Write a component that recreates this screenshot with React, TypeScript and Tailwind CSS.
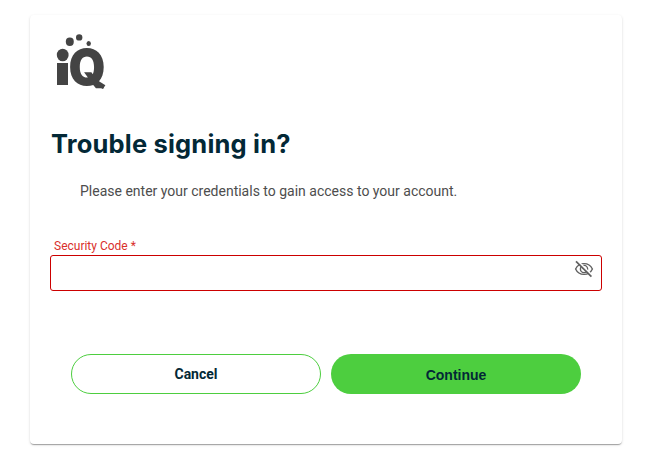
import { useState } from "react";

function Logo() {
  return (
    <svg width="52" height="58" viewBox="0 0 52 58" className="ml-1.5 block overflow-visible" fill="#444444" aria-label="iQ">
      <ellipse cx="6.7" cy="21" rx="5.9" ry="6.3" />
      <rect x="1" y="29" width="11" height="22" />
      <ellipse cx="13.8" cy="7.8" rx="4" ry="4.2" />
      <circle cx="23.2" cy="3.4" r="3.2" />
      <ellipse cx="32.7" cy="9.6" rx="2.2" ry="2.5" />
      <text
        transform="translate(12.6 51.3) scale(.97 1)"
        fontFamily="Inter, 'Liberation Sans', sans-serif"
        fontWeight="900"
        fontSize="49"
      >
        Q
      </text>
      <path d="M41 46 49.4 51.2 46.8 55 37 49Z" />
    </svg>
  );
}

function EyeOffIcon() {
  return (
    <svg width="20" height="20" viewBox="0 0 20 20" fill="none" stroke="#606060" strokeWidth="1.4">
      <path d="M1.6 10C3.2 6.5 6.2 4.6 10 4.6S16.8 6.5 18.4 10C16.8 13.5 13.8 15.4 10 15.4S3.2 13.5 1.6 10Z" />
      <circle cx="10" cy="10" r="3.6" />
      <path d="M3.2 1.4 18.6 16.8" stroke="#ffffff" strokeWidth="1.6" />
      <path d="M2 2.4 17.4 17.6" strokeWidth="1.7" />
    </svg>
  );
}

export default function App() {
  const [code, setCode] = useState("");
  const [visible, setVisible] = useState(false);

  return (
    <main className="h-[458px] w-[648px] bg-white pt-[15px] pl-[30px] font-[Roboto,sans-serif]">
      <section className="h-[429px] w-[592px] rounded-[4px] bg-white px-5 pt-[19px] shadow-[0_2px_1px_-1px_rgba(0,0,0,.2),0_1px_1px_rgba(0,0,0,.14),0_1px_3px_rgba(0,0,0,.12)]">
        <Logo />
        <h1 className="mt-9 ml-px font-[Inter,Roboto,sans-serif] text-[25.5px] leading-8 font-bold tracking-[0.18px] text-[#032836]">
          Trouble signing in?
        </h1>
        <p className="mt-[21px] ml-[30px] text-sm leading-5 text-[#4d4d4d]">
          Please enter your credentials to gain access to your account.
        </p>

        <form onSubmit={(e) => e.preventDefault()}>
          <label htmlFor="code" className="mt-[37px] ml-1 block text-xs leading-4 text-[#d9302c]">
            Security Code *
          </label>
          <div className="mt-px flex h-9 w-[552px] rounded-[3px] border border-[#cc0000] pr-[7px]">
            <input
              id="code"
              type={visible ? "text" : "password"}
              value={code}
              onChange={(e) => setCode(e.target.value)}
              className="min-w-0 flex-1 px-3 text-sm outline-none"
            />
            <button type="button" aria-label="Toggle visibility" onClick={() => setVisible(!visible)} className="mt-[3px] h-5 w-5">
              <EyeOffIcon />
            </button>
          </div>

          <div className="mt-[63px] ml-[21px] flex gap-2.5 text-sm font-bold text-[#032836]">
            <button type="button" className="h-10 w-[250px] rounded-full border border-[#4dce3f]">
              Cancel
            </button>
            <button type="submit" className="h-10 w-[250px] rounded-full bg-[#4dce3f] pt-0.5 font-['Liberation_Sans',Arial,sans-serif]">
              Continue
            </button>
          </div>
        </form>
      </section>
    </main>
  );
}
